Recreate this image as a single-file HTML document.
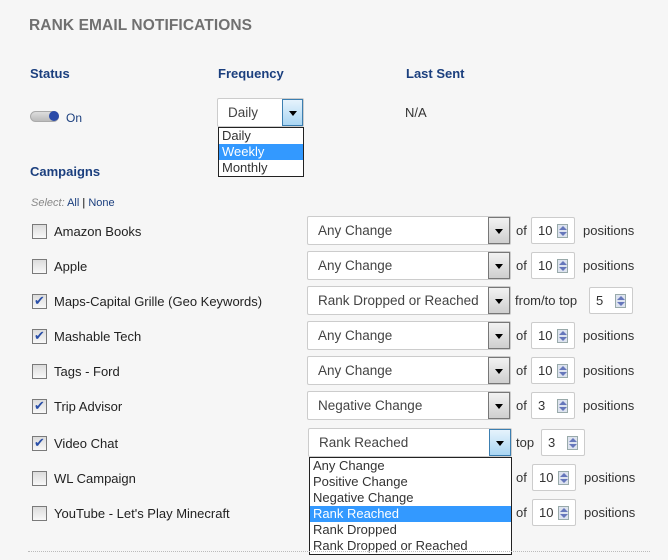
<!DOCTYPE html>
<html><head><style>
*{margin:0;padding:0;box-sizing:border-box}
body{width:668px;height:560px;background:#f6f6f6;font-family:"Liberation Sans",sans-serif;position:relative;overflow:hidden;color:#333}
.a{position:absolute;white-space:nowrap}
.h{font-size:15.5px;font-weight:bold;color:#707070;left:29px;top:17px;letter-spacing:0.1px}
.lb{font-size:13px;font-weight:bold;color:#1b3f7e}
.cb{position:absolute;left:32px;width:15px;height:15px;border:1px solid #7a7a7a;background:linear-gradient(#dcdcdc,#f8f8f8)}
.cb.c::after{content:"✔";position:absolute;left:1px;top:-2px;font-size:13px;color:#2a4fa8}
.nm{position:absolute;left:54px;font-size:13px;color:#222}
.sel{position:absolute;left:307px;width:204px;height:29px;border:1px solid #ccc;border-radius:2px;background:#fff;font-size:13.5px;color:#444;padding:6px 0 0 10px}
.sel .ar{position:absolute;right:0;top:0;width:22px;height:27px;border:1px solid #777;background:linear-gradient(#f2f2f2,#cfcfcf)}
.ar::after{content:"";position:absolute;left:6px;top:11px;border-left:4px solid transparent;border-right:4px solid transparent;border-top:5px solid #000}
.ar.b{border-color:#3c7fb1;background:linear-gradient(#e6f3fc,#aad6f3)}
.t{position:absolute;font-size:13px;color:#333}
.sp{position:absolute;width:44px;height:27px;border:1px solid #ccc;border-radius:2px;background:#fff;font-size:13px;color:#333;padding:5px 0 0 6px}
.sp i{position:absolute;right:6px;top:6px;width:11px;height:14px;border:1px solid #9aa;background:#dde3ef}
.sp i::before{content:"";position:absolute;left:1px;top:1px;border-left:4px solid transparent;border-right:4px solid transparent;border-bottom:4px solid #6677bb}
.sp i::after{content:"";position:absolute;left:1px;bottom:1px;border-left:4px solid transparent;border-right:4px solid transparent;border-top:4px solid #6677bb}
.lst{position:absolute;background:#fff;border:1px solid #222;font-size:13px;color:#333}
.lst div{height:16px;line-height:16px;padding-left:3px}
.lst .hi{background:#3399ff;color:#fff}
</style></head><body>
<div class="a h">RANK EMAIL NOTIFICATIONS</div>
<div class="a lb" style="left:30px;top:66px">Status</div>
<div class="a lb" style="left:218px;top:66px">Frequency</div>
<div class="a lb" style="left:406px;top:66px">Last Sent</div>
<div class="a" style="left:30px;top:111px;width:29px;height:11px;border-radius:6px;background:linear-gradient(#ddd,#bbb);border:1px solid #aaa"></div>
<div class="a" style="left:49px;top:111px;width:10px;height:10px;border-radius:50%;background:#2a4aa8"></div>
<div class="a" style="left:66px;top:111px;font-size:12px;color:#1b3f7e">On</div>
<div class="a" style="left:405px;top:105px;font-size:13px;color:#333">N/A</div>
<div class="sel" style="left:217px;top:98px;width:87px;height:29px">Daily<div class="ar b" style="width:21px"></div></div>
<div class="lst" style="left:218px;top:127px;width:86px">
<div>Daily</div><div class="hi">Weekly</div><div>Monthly</div></div>
<div class="a lb" style="left:30px;top:164px">Campaigns</div>
<div class="a" style="left:31px;top:197px;font-size:11px;color:#888"><i>Select:</i> <span style="color:#1b3f7e">All</span> <span style="color:#000">|</span> <span style="color:#1b3f7e">None</span></div>

<div class="cb" style="top:224px"></div><div class="nm" style="top:224px">Amazon Books</div>
<div class="cb" style="top:259px"></div><div class="nm" style="top:259px">Apple</div>
<div class="cb c" style="top:294px"></div><div class="nm" style="top:294px">Maps-Capital Grille (Geo Keywords)</div>
<div class="cb c" style="top:329px"></div><div class="nm" style="top:329px">Mashable Tech</div>
<div class="cb" style="top:364px"></div><div class="nm" style="top:364px">Tags - Ford</div>
<div class="cb c" style="top:399px"></div><div class="nm" style="top:399px">Trip Advisor</div>
<div class="cb c" style="top:436px"></div><div class="nm" style="top:436px">Video Chat</div>
<div class="cb" style="top:471px"></div><div class="nm" style="top:471px">WL Campaign</div>
<div class="cb" style="top:506px"></div><div class="nm" style="top:506px">YouTube - Let's Play Minecraft</div>

<div class="sel" style="top:216px">Any Change<div class="ar"></div></div>
<div class="t" style="left:516px;top:223px">of</div><div class="sp" style="left:531px;top:217px">10<i></i></div><div class="t" style="left:583px;top:223px">positions</div>
<div class="sel" style="top:251px">Any Change<div class="ar"></div></div>
<div class="t" style="left:516px;top:258px">of</div><div class="sp" style="left:531px;top:252px">10<i></i></div><div class="t" style="left:583px;top:258px">positions</div>
<div class="sel" style="top:286px">Rank Dropped or Reached<div class="ar"></div></div>
<div class="t" style="left:515px;top:293px">from/to top</div><div class="sp" style="left:589px;top:287px">5<i></i></div>
<div class="sel" style="top:321px">Any Change<div class="ar"></div></div>
<div class="t" style="left:516px;top:328px">of</div><div class="sp" style="left:531px;top:322px">10<i></i></div><div class="t" style="left:583px;top:328px">positions</div>
<div class="sel" style="top:356px">Any Change<div class="ar"></div></div>
<div class="t" style="left:516px;top:363px">of</div><div class="sp" style="left:531px;top:357px">10<i></i></div><div class="t" style="left:583px;top:363px">positions</div>
<div class="sel" style="top:391px">Negative Change<div class="ar"></div></div>
<div class="t" style="left:516px;top:398px">of</div><div class="sp" style="left:531px;top:392px">3<i></i></div><div class="t" style="left:583px;top:398px">positions</div>
<div class="sel" style="top:428px;left:308px">Rank Reached<div class="ar b"></div></div>
<div class="t" style="left:516px;top:435px">top</div><div class="sp" style="left:541px;top:429px">3<i></i></div>
<div class="t" style="left:516px;top:470px">of</div><div class="sp" style="left:532px;top:464px">10<i></i></div><div class="t" style="left:584px;top:470px">positions</div>
<div class="t" style="left:516px;top:505px">of</div><div class="sp" style="left:532px;top:499px">10<i></i></div><div class="t" style="left:584px;top:505px">positions</div>
<div class="lst" style="left:309px;top:457px;width:203px;height:98px">
<div>Any Change</div><div>Positive Change</div><div>Negative Change</div><div class="hi">Rank Reached</div><div>Rank Dropped</div><div>Rank Dropped or Reached</div></div>
<div class="a" style="left:28px;top:551px;width:622px;border-top:1px dotted #bbb"></div>
</body></html>
